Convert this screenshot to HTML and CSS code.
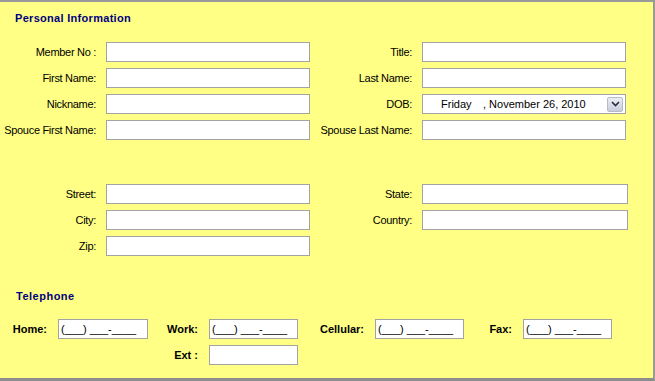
FILE: index.html
```html
<!DOCTYPE html>
<html lang="en">
<head>
  <meta charset="UTF-8">
  <title>Member Details</title>
  <link rel="stylesheet" href="styles.css">
</head>
<body>
  <div class="panel">
    <h2 class="section-title">Personal Information</h2>

    <div class="form-grid">
      <label class="lbl">Member No :</label>
      <input class="txt" type="text">
      <label class="lbl">Title:</label>
      <input class="txt" type="text">

      <label class="lbl">First Name:</label>
      <input class="txt" type="text">
      <label class="lbl">Last Name:</label>
      <input class="txt" type="text">

      <label class="lbl">Nickname:</label>
      <input class="txt" type="text">
      <label class="lbl">DOB:</label>
      <div class="date-pick">
        <span class="day">Friday</span>
        <span class="date">, November 26, 2010</span>
        <span class="drop-btn">
          <svg width="9" height="6" viewBox="0 0 9 6"><path d="M1 1 L4.5 4.5 L8 1" fill="none" stroke="#2b2b3a" stroke-width="1.6"/></svg>
        </span>
      </div>

      <label class="lbl">Spouce First Name:</label>
      <input class="txt" type="text">
      <label class="lbl">Spouse Last Name:</label>
      <input class="txt" type="text">
    </div>

    <div class="form-grid address">
      <label class="lbl">Street:</label>
      <input class="txt" type="text">
      <label class="lbl">State:</label>
      <input class="txt wide" type="text">

      <label class="lbl">City:</label>
      <input class="txt" type="text">
      <label class="lbl">Country:</label>
      <input class="txt wide" type="text">

      <label class="lbl">Zip:</label>
      <input class="txt" type="text">
    </div>

    <h2 class="section-title phone-title">Telephone</h2>

    <div class="phone-grid">
      <label class="lbl bold">Home:</label>
      <input class="txt phone" type="text" value="(___) ___-____">
      <label class="lbl bold">Work:</label>
      <input class="txt phone" type="text" value="(___) ___-____">
      <label class="lbl bold">Cellular:</label>
      <input class="txt phone" type="text" value="(___) ___-____">
      <label class="lbl bold">Fax:</label>
      <input class="txt phone" type="text" value="(___) ___-____">

      <span></span>
      <span></span>
      <label class="lbl bold">Ext :</label>
      <input class="txt phone" type="text">
    </div>
  </div>
</body>
</html>
```

FILE: styles.css
```css
html, body {
  margin:0;
  padding:0;
  background:#ffffff;
}
.panel {
  box-sizing:border-box;
  width:655px;
  height:381px;
  background:#ffff85;
  border-top:2px solid #9a9a9a;
  border-right:2px solid #9a9a9a;
  border-bottom:3px solid #8e8e8e;
  padding-top:10px;
  font-family:"Liberation Sans", Arial, sans-serif;
  font-size:11px;
  color:#000;
}
.section-title {
  margin:0 0 17px 15px;
  font-size:11px;
  line-height:13px;
  font-weight:bold;
  letter-spacing:0.3px;
  color:#000080;
}
.phone-title {
  margin:34px 0 16px 16px;
  letter-spacing:0.5px;
}
.form-grid {
  display:grid;
  grid-template-columns:106px 204px 112px 204px;
  grid-auto-rows:20px;
  row-gap:6px;
}
.form-grid.address {
  margin-top:44px;
}
.lbl {
  display:flex;
  align-items:center;
  justify-content:flex-end;
  padding-right:10px;
  white-space:nowrap;
  letter-spacing:-0.3px;
}
.lbl.bold {
  font-weight:bold;
  letter-spacing:0;
  padding-right:11px;
}
.txt {
  box-sizing:border-box;
  margin:0;
  height:20px;
  width:100%;
  padding:0 2px;
  border:1px solid #a3a3a3;
  background:#fff;
  font-family:"Liberation Sans", Arial, sans-serif;
  font-size:11px;
  color:#000;
  outline:none;
}
.txt.wide {
  width:206px;
}
.date-pick {
  box-sizing:border-box;
  height:20px;
  border:1px solid #a3a3a3;
  background:#fff;
  display:flex;
  align-items:center;
  padding-left:18px;
  white-space:nowrap;
}
.date-pick .day {
  width:42px;
}
.date-pick .drop-btn {
  margin-left:auto;
  margin-right:2px;
  width:16px;
  height:15px;
  box-sizing:border-box;
  border:1px solid #b8bac8;
  border-radius:2px;
  background:linear-gradient(#eceef6, #c9ccdc);
  display:flex;
  align-items:center;
  justify-content:center;
}
.phone-grid {
  display:grid;
  grid-template-columns:58px 90px 61px 89px 77px 89px 59px 89px;
  grid-auto-rows:20px;
  row-gap:6px;
}
```
